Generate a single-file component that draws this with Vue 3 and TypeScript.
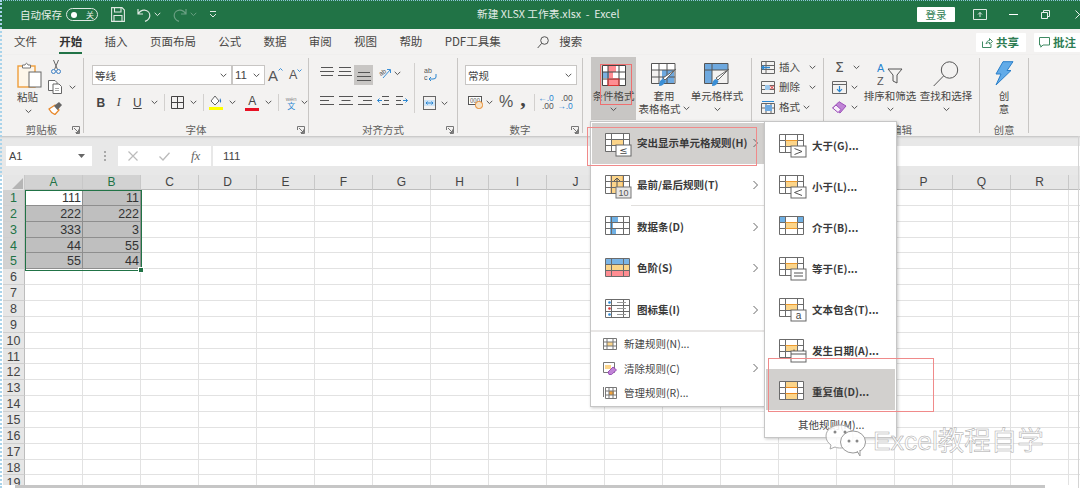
<script setup lang="ts">
import { h } from 'vue'

const Ch = () =>
  h('svg', { class: 'ch', width: 7, height: 5, viewBox: '0 0 7 5', fill: 'none', stroke: '#555', 'stroke-width': 1 }, [
    h('path', { d: 'M.7 .8 3.5 3.6 6.3 .8' })
  ])
const Launcher = () =>
  h('svg', { class: 'launcher', width: 8, height: 8, viewBox: '0 0 8 8', fill: 'none', stroke: '#777', 'stroke-width': 1 }, [
    h('path', { d: 'M.5 4V.5H7.5V7.5H4M2 2 6.5 6.5M6.5 3.5V6.5H3.5' })
  ])
const Lines = (p: { w: number[] }) =>
  h('svg', { width: 14, height: 12, viewBox: '0 0 14 12', fill: 'none', stroke: '#555', 'stroke-width': 1 },
    p.w.map((x, i) => h('path', { d: `M${(14 - x) / 2} ${1.5 + i * 4}h${x}` })))
Lines.props = ['w']
const AlignL = () =>
  h('svg', { width: 14, height: 12, viewBox: '0 0 14 12', fill: 'none', stroke: '#555', 'stroke-width': 1 }, [
    h('path', { d: 'M0 1.5h14M0 5.5h9M0 9.5h14' })
  ])

const tabs = ['文件', '开始', '插入', '页面布局', '公式', '数据', '审阅', '视图', '帮助', 'PDF工具集']
const colNames = 'ABCDEFGHIJKLMNOPQR '.split('')
const data: Record<number, string[]> = {
  1: ['111', '11'],
  2: ['222', '222'],
  3: ['333', '3'],
  4: ['44', '55'],
  5: ['55', '44']
}
const rows = Array.from({ length: 19 }, (_, i) => i + 1)
const cellText = (r: number, c: number) => (c < 2 && data[r] ? data[r][c] : '')
const isGrey = (r: number, c: number) => r <= 5 && c < 2 && !(r === 1 && c === 0)

const mainItems = [
  { kind: 'hl', label: '突出显示单元格规则(H)', cls: 'active' },
  { kind: 'top', label: '最前/最后规则(T)', cls: 'rule' },
  { kind: 'bar', label: '数据条(D)', cls: '' },
  { kind: 'scale', label: '色阶(S)', cls: '' },
  { kind: 'set', label: '图标集(I)', cls: '' }
]
const subItems = [
  { mark: '>', label: '大于(G)...', cls: '' },
  { mark: '<', label: '小于(L)...', cls: '' },
  { mark: 'between', label: '介于(B)...', cls: '' },
  { mark: '=', label: '等于(E)...', cls: '' },
  { mark: 'a', label: '文本包含(T)...', cls: '' },
  { mark: 'date', label: '发生日期(A)...', cls: 'short' },
  { mark: 'dup', label: '重复值(D)...', cls: 'active dup' }
]
</script>

<template>
  <div class="app">
    <header class="titlebar">
      <span class="autosave">自动保存</span>
      <span class="toggle"><i class="knob"></i><b>关</b></span>
      <svg class="qa save" width="14" height="15" viewBox="0 0 14 15" fill="none" stroke="#dfe9e3" stroke-width="1.1">
        <path d="M.6.6H11L13.4 3V14.4H.6zM3.5.6V5H10V.6M3 14.4V8.5H11V14.4" />
      </svg>
      <svg class="qa undo" width="14" height="14" viewBox="0 0 14 14" fill="none" stroke="#dfe9e3" stroke-width="1.2">
        <path d="M1 1V6H6M1.2 6C3 3 5 2 7.500 2.200 11 2.500 13 5 12.800 8 12.500 10.500 10.500 12.500 8 13.400" />
      </svg>
      <svg class="tch" width="7" height="5" viewBox="0 0 7 5" fill="none" stroke="#dfe9e3"><path d="M.7 .8 3.500 3.600 6.300 .8" /></svg>
      <svg class="qa redo" width="14" height="14" viewBox="0 0 14 14" fill="none" stroke="#6aa083" stroke-width="1.2">
        <path d="M13 1V6H8M12.800 6C11 3 9 2 6.500 2.200 3 2.500 1 5 1.200 8 1.500 10.500 3.500 12.500 6 13.400" />
      </svg>
      <svg class="tch dim" width="7" height="5" viewBox="0 0 7 5" fill="none" stroke="#6aa083"><path d="M.7 .8 3.500 3.600 6.300 .8" /></svg>
      <svg class="qa custom" width="8" height="7" viewBox="0 0 8 7" fill="none" stroke="#dfe9e3"><path d="M1 .5H7M1 3 4 6 7 3" /></svg>
      <span class="doc">新建 XLSX 工作表.xlsx&nbsp; - &nbsp;Excel</span>
      <button class="login">登录</button>
      <svg class="win display" width="14" height="11" viewBox="0 0 14 11" fill="none" stroke="#dfe9e3"><path d="M.5.500H13.500V10.500H.5zM7 8V3.500M5 5.500 7 3.500 9 5.500" /></svg>
      <svg class="win min" width="9" height="1" viewBox="0 0 9 1"><path d="M0 .5H9" stroke="#fff" /></svg>
      <svg class="win restore" width="9" height="9" viewBox="0 0 9 9" fill="none" stroke="#e8f0eb"><path d="M.5 2.500H6.500V8.500H.5zM2.500 2.500V.5H8.500V6.500H6.500" /></svg>
      <svg class="win close" width="9" height="9" viewBox="0 0 9 9" fill="none" stroke="#e8f0eb"><path d="M.5.5 8.500 8.500M8.500.5.5 8.500" /></svg>
    </header>

    <nav class="tabs">
      <span v-for="t in tabs" :key="t" class="tab" :class="{ on: t === '开始' }">{{ t }}</span>
      <svg class="search-ic" width="12" height="13" viewBox="0 0 12 13" fill="none" stroke="#555" stroke-width="1">
        <circle cx="7.500" cy="4.500" r="3.800" /><path d="M4.700 7.300 .7 12" />
      </svg>
      <span class="tab search">搜索</span>
      <button class="pill share">
        <svg width="11" height="11" viewBox="0 0 11 11" fill="none" stroke="#3f8a63"><path d="M.5 4.500V10.500H9V7M4 7C4.500 4.500 6 3.500 7.500 3.500V1.500L10.500 4.500 7.500 7V5.500C6 5.500 5 6 4 7Z" /></svg>
        共享
      </button>
      <button class="pill note">
        <svg width="11" height="11" viewBox="0 0 11 11" fill="none" stroke="#3f8a63"><path d="M.5.500H10.500V8H4L1.800 10.200V8H.5z" /></svg>
        批注
      </button>
    </nav>

    <section class="ribbon">
      <!-- 剪贴板 -->
      <div class="group g-clip">
        <div class="body clip-body">
          <div class="big paste">
            <svg width="25" height="26" viewBox="0 0 25 26" fill="none">
              <rect x="1" y="4" width="17" height="21" fill="#fdf6ea" stroke="#ee9f3c" stroke-width="1.400" />
              <path d="M5.500 6V3H8Q9.500-.5 11 3H13.500V6z" fill="#fff" stroke="#777" />
              <rect x="12" y="10" width="12" height="15" fill="#fff" stroke="#666" />
            </svg>
            <span class="lbl mt">粘贴</span>
            <Ch class="chm" />
          </div>
          <div class="clip-tools">
            <svg class="cut" width="10" height="14" viewBox="0 0 10 14" fill="none" stroke="#3b7fc4">
              <path d="M2.500 0 6.500 9.500M7.500 0 3.500 9.500" stroke="#666" /><circle cx="2.500" cy="11.500" r="2" /><circle cx="7.500" cy="11.500" r="2" />
            </svg>
            <span class="hrow">
              <svg width="15" height="14" viewBox="0 0 15 14" fill="#fff" stroke="#666">
                <path d="M.5.500H7L9 2.500V10.500H.5z" /><path d="M5 4H11L13.500 6.500V13.500H5z" /><path d="M7 8.500H11M7 10.500H11" stroke="#aaa" />
              </svg>
              <Ch class="ml6" />
            </span>
            <svg class="painter" width="15" height="14" viewBox="0 0 15 14">
              <path d="M1 8 7 4 11 9 7 13.500Q3 12 1 8Z" fill="#fff" stroke="#e8882a" stroke-width="1.300" />
              <path d="M6 5 11 1 14 4 9.500 9z" fill="#666" />
            </svg>
          </div>
        </div>
        <div class="glabel">剪贴板<Launcher /></div>
      </div>

      <!-- 字体 -->
      <div class="group g-font">
        <div class="body font-body">
          <div class="hrow">
            <div class="combo c-name"><span>等线</span><Ch /></div>
            <div class="combo c-size"><span>11</span><Ch /></div>
            <span class="aa a-up">A<svg width="5" height="3" viewBox="0 0 5 3" fill="none" stroke="#3b8fd6"><path d="M.5 2.500 2.500 .5 4.500 2.500" /></svg></span>
            <span class="aa a-down">A<svg width="5" height="3" viewBox="0 0 5 3" fill="none" stroke="#3b8fd6"><path d="M.5 .5 2.500 2.500 4.500 .5" /></svg></span>
          </div>
          <div class="hrow font-tools">
            <b class="fmt">B</b>
            <i class="fmt italic">I</i>
            <u class="fmt und">U</u>
            <Ch class="ml9" />
            <i class="vsep s1"></i>
            <svg class="borders" width="13" height="13" viewBox="0 0 13 13" fill="none" stroke="#444"><path d="M.5.500H12.500V12.500H.5zM6.500.500V12.500M.5 6.500H12.500" /></svg>
            <Ch class="ml6" />
            <i class="vsep s2"></i>
            <span class="stack fill">
              <svg width="12" height="11" viewBox="0 0 12 11"><path d="M1 6 5 1 9 6 5 10z" fill="#fff" stroke="#666" /><path d="M10 3Q12 6 10.500 8 9 6.500 10 3Z" fill="#2a75c4" /></svg>
              <i class="swatch yellow"></i>
            </span>
            <Ch class="ml6" />
            <span class="stack color"><em>A</em><i class="swatch red"></i></span>
            <Ch class="ml6" />
            <i class="vsep s3"></i>
            <span class="wen"><small>wén</small><em>文</em></span>
            <Ch class="ml3" />
          </div>
        </div>
        <div class="glabel">字体<Launcher /></div>
      </div>

      <!-- 对齐方式 -->
      <div class="group g-align">
        <div class="body align-body">
          <div class="align-left">
            <div class="hrow a-row1">
              <Lines :w="[12, 14, 12]" />
              <Lines class="ml4" :w="[12, 12, 14]" />
              <span class="pressed"><Lines :w="[12, 14, 14]" /></span>
              <svg class="orient" width="13" height="13" viewBox="0 0 13 13" fill="none" stroke="#555">
                <text x="1" y="8" font-size="6.500" fill="#555" stroke="none" font-family="Liberation Sans, sans-serif" transform="rotate(-35 4 6)">ab</text>
                <path d="M5 11 12 3M9 2.500H12.500V6" stroke="#3b8fd6" />
              </svg>
              <Ch class="orient-ch" />
            </div>
            <div class="hrow a-row2">
              <AlignL />
              <Lines class="ml5" :w="[14, 9, 14]" />
              <svg class="ml5" width="14" height="12" viewBox="0 0 14 12" fill="none" stroke="#555"><path d="M0 1.500h14M5 5.500h9M0 9.500h14" /></svg>
              <svg class="ml5" width="12" height="12" viewBox="0 0 12 12" fill="none" stroke="#555"><path d="M5 1.500h7M7 5.500h5M5 9.500h7" /><path d="M5 5.500H.5M2.500 3.500.5 5.500 2.500 7.500" stroke="#2a86d1" /></svg>
              <svg class="ml7" width="12" height="12" viewBox="0 0 12 12" fill="none" stroke="#555"><path d="M0 1.500h7M0 5.500h5M0 9.500h7" /><path d="M7 5.500h4.500M9.500 3.500 11.500 5.500 9.500 7.500" stroke="#2a86d1" /></svg>
            </div>
          </div>
          <i class="vsep align-sep"></i>
          <div class="align-right">
            <svg class="wrap" width="13" height="15" viewBox="0 0 13 15" fill="none">
              <text x="0" y="6" font-size="7" fill="#555" font-family="Liberation Sans, sans-serif">ab</text>
              <text x="0" y="13" font-size="7" fill="#555" font-family="Liberation Sans, sans-serif">c</text>
              <path d="M12 7V10Q12 12 9 12H5M7 10 5 12 7 14" stroke="#2a86d1" />
            </svg>
            <div class="hrow merge-row">
              <svg class="merge" width="13" height="14" viewBox="0 0 13 14" fill="none">
                <rect x=".5" y=".5" width="12" height="13" stroke="#666" /><rect x="1" y="4" width="11" height="6" fill="#cfe4f6" />
                <path d="M3 7H10M4.500 5.500 3 7 4.500 8.500M8.500 5.500 10 7 8.500 8.500" stroke="#2a86d1" />
              </svg>
              <Ch class="ml5" />
            </div>
          </div>
        </div>
        <div class="glabel">对齐方式<Launcher /></div>
      </div>

      <!-- 数字 -->
      <div class="group g-num">
        <div class="body num-body">
          <div class="combo c-fmt"><span>常规</span><Ch /></div>
          <div class="hrow num-tools">
            <svg width="15" height="14" viewBox="0 0 15 14" fill="none">
              <rect x=".5" y="1.500" width="13" height="8" fill="#fff" stroke="#555" /><text x="2" y="8" font-size="6" fill="#555">000</text>
              <rect x="7.500" y="6.500" width="7" height="7" rx="3" fill="#f5e2c7" stroke="#e8882a" />
            </svg>
            <Ch class="ml3" />
            <span class="pct">%</span>
            <span class="comma">,</span>
            <i class="vsep s4"></i>
            <span class="dec d1"><small class="blue">←.0</small><small>.00</small></span>
            <span class="dec d2"><small>.00</small><small class="blue">→.0</small></span>
          </div>
        </div>
        <div class="glabel">数字<Launcher /></div>
      </div>

      <!-- 样式 -->
      <div class="group g-style">
        <div class="style-btn cf">
          <svg width="24" height="21" viewBox="0 0 24 21">
            <path d="M.5.500H23.500V20.500H.5z" fill="#fff" />
            <path d="M6 .5H14V7H11V13H6z" fill="#ff8d92" /><rect x="1" y="7" width="6" height="6" fill="#7bb0e0" /><rect x="6" y="14" width="11" height="6" fill="#ff8d92" />
            <path d="M.5.500H23.500V20.500H.5zM.5 7H23.500M.5 14H23.500M6 .5V20.500M17 .5V20.500" fill="none" stroke="#444" />
            <path d="M6 14H17V20.500H6z" fill="none" stroke="#d33" />
          </svg>
          <span class="lbl l1">条件格式</span>
          <Ch class="chb" />
        </div>
        <div class="style-btn tb">
          <svg width="26" height="24" viewBox="0 0 26 24">
            <rect x="11" y="7" width="12" height="14" fill="#6ea9df" /><rect x="1" y="1" width="23" height="6" fill="#fff" />
            <path d="M.5.500H24V20.500H.5zM.5 7H24M.5 14H24M8 .5V20.500M16 .5V20.500" fill="none" stroke="#555" />
            <path d="M25 6 14 17 12 15Z" fill="#fff" stroke="#666" /><path d="M12 16Q8 17 8 23 13 23 14.500 18z" fill="#3b8fd6" />
          </svg>
          <span class="lbl l1">套用</span>
          <span class="lbl l2">表格格式<Ch class="ml2" /></span>
        </div>
        <div class="style-btn cs">
          <svg width="26" height="24" viewBox="0 0 26 24">
            <rect x="1" y="1" width="23" height="6" fill="#6ea9df" /><rect x="1" y="7" width="7" height="14" fill="#6ea9df" />
            <path d="M.5.500H24V20.500H.5zM.5 7H24M8 .5V20.500" fill="none" stroke="#555" />
            <path d="M25 6 14 17 12 15Z" fill="#fff" stroke="#666" /><path d="M12 16Q8 17 8 23 13 23 14.500 18z" fill="#3b8fd6" />
          </svg>
          <span class="lbl l1">单元格样式</span>
          <Ch class="chb" />
        </div>
      </div>

      <!-- 单元格 -->
      <div class="group g-cells">
        <div class="cell-row">
          <svg width="14" height="13" viewBox="0 0 14 13" fill="none"><path d="M.5.500H13.500V12.500H.5zM.5 4.500H13.500M.5 8.500H13.500M5 .5V12.500" stroke="#666" /><path d="M1 6.500H9M3 4.500 1 6.500 3 8.500" stroke="#2a86d1" stroke-width="1.300" /></svg>
          <span>插入</span><Ch class="ml9" />
        </div>
        <div class="cell-row">
          <svg width="14" height="13" viewBox="0 0 14 13" fill="none"><path d="M.5.500H13.500V12.500H.5zM.5 4.500H13.500M.5 8.500H13.500" stroke="#666" /><rect x="4" y="4" width="5" height="5" fill="#9cc8ec" /><path d="M9 4.500 13 8.500M13 4.500 9 8.500" stroke="#d33" /></svg>
          <span>删除</span><Ch class="ml9" />
        </div>
        <div class="cell-row">
          <svg width="14" height="13" viewBox="0 0 14 13" fill="none"><path d="M.5 2.500H13.500V12.500H.5zM.5 7H13.500M5 2.500V12.500M10 2.500V12.500" stroke="#666" /><rect x="4" y="4" width="7" height="6" fill="#6ea9df" /><path d="M1 .5H13" stroke="#2a86d1" /></svg>
          <span>格式</span><Ch class="ml3" />
        </div>
      </div>

      <!-- 编辑 -->
      <div class="group g-edit">
        <div class="body edit-body">
          <div class="edit-col">
            <span class="hrow"><span class="sigma">Σ</span><Ch class="ml6" /></span>
            <span class="hrow">
              <svg width="15" height="13" viewBox="0 0 15 13" fill="none"><path d="M.5.500H14.500V12.500H.5zM.5 3.500H14.500" stroke="#666" /><path d="M7.500 5V10.500M5 8.200 7.500 10.700 10 8.200" stroke="#2a86d1" stroke-width="1.200" /></svg>
              <Ch class="ml4" />
            </span>
            <span class="hrow">
              <svg width="15" height="13" viewBox="0 0 15 13"><path d="M.7 7 7 .7 14 5 8 12z" fill="#c084d6" stroke="#9b4fb8" /><path d="M.7 7 4 4 9 8.500 6 11.500z" fill="#f7edfa" stroke="#9b4fb8" /></svg>
              <Ch class="ml4" />
            </span>
          </div>
          <div class="tool-big sort">
            <svg width="26" height="24" viewBox="0 0 26 24" fill="none">
              <text x="0" y="10" font-size="11" fill="#2a86d1" font-family="Liberation Sans, sans-serif">A</text>
              <text x="0" y="23" font-size="11" fill="#555" font-family="Liberation Sans, sans-serif">Z</text>
              <path d="M11 7H25L20 13V21L16 19V13Z" stroke="#555" />
            </svg>
            <span class="lbl l1">排序和筛选</span>
            <Ch class="chb" />
          </div>
          <div class="tool-big find">
            <svg width="26" height="26" viewBox="0 0 26 26" fill="none" stroke="#555">
              <circle cx="16.500" cy="9" r="8.200" /><path d="M10.500 15 .7 25" />
            </svg>
            <span class="lbl l1">查找和选择</span>
            <Ch class="chb" />
          </div>
        </div>
        <div class="glabel">编辑</div>
      </div>

      <!-- 创意 -->
      <div class="group g-idea">
        <div class="idea-btn">
          <svg width="19" height="25" viewBox="0 0 19 25"><path d="M8 .7H18L12 9.500H16L1 24 6 13H1Z" fill="#62abe8" stroke="#2a7fc9" /></svg>
          <span class="lbl l1">创</span>
          <span class="lbl l2">意</span>
        </div>
        <div class="glabel">创意</div>
      </div>
    </section>

    <div class="formula">
      <div class="namebox"><span>A1</span><svg width="7" height="4" viewBox="0 0 7 4"><path d="M0 0H7L3.500 4Z" fill="#666" /></svg></div>
      <i class="grip"></i>
      <div class="fx-btns">
        <svg width="10" height="10" viewBox="0 0 10 10" fill="none" stroke="#bbb" stroke-width="1.200"><path d="M.5.5 9.500 9.500M9.500.5.5 9.500" /></svg>
        <svg width="11" height="9" viewBox="0 0 11 9" fill="none" stroke="#bbb" stroke-width="1.300"><path d="M.5 4.500 4 8 10.500 .7" /></svg>
        <span class="fx">fx</span>
      </div>
      <div class="finput">111</div>
    </div>

    <div class="sheet">
      <div class="corner"><i></i></div>
      <div v-for="(c, i) in colNames" :key="i" class="colh" :class="{ sel: i < 2 }">{{ c }}</div>
      <template v-for="r in rows" :key="r">
        <div class="rowh" :class="{ sel: r <= 5 }">{{ r }}</div>
        <div v-for="(c, i) in colNames" :key="i" class="cell" :class="{ grey: isGrey(r, i), white: r === 1 && i === 0 }">{{ cellText(r, i) }}</div>
      </template>
      <div class="selection"><i></i></div>
    </div>
    <div class="hscroll"><i></i></div>
    <i class="edge"></i>

    <!-- 条件格式 下拉菜单 -->
    <div class="menu main-menu">
      <div v-for="m in mainItems" :key="m.kind" class="mitem" :class="m.cls">
        <svg class="micon" width="34" height="26" viewBox="0 0 34 26">
          <rect x="1" y="1" width="23" height="17" fill="#fff" />
          <template v-if="m.kind === 'hl'">
            <rect x="6" y="6.500" width="12" height="6" fill="#fcd58a" /><path d="M6 6.500H18" stroke="#ed9a2d" />
          </template>
          <template v-else-if="m.kind === 'top'">
            <rect x="6" y="1" width="12" height="17" fill="#fcd58a" /><path d="M6 1V18M18 1V18" stroke="#ed9a2d" />
          </template>
          <template v-else-if="m.kind === 'bar'">
            <rect x="5" y="1" width="8" height="5.500" fill="#6fb0e4" /><rect x="5" y="6.500" width="3" height="6" fill="#6fb0e4" /><rect x="5" y="12.500" width="6" height="6" fill="#6fb0e4" />
          </template>
          <template v-else-if="m.kind === 'scale'">
            <rect x="1" y="1" width="23" height="5.500" fill="#7ab4e6" /><rect x="1" y="6.500" width="23" height="5.500" fill="#fcd58a" /><rect x="1" y="12" width="23" height="6" fill="#ff8d92" />
          </template>
          <path d="M.5.500H24.500V18.500H.5zM.5 6.500H24.500M.5 12.500H24.500M6.500.5V18.500M18.500.5V18.500" fill="none" stroke="#6b6b6b" />
          <template v-if="m.kind === 'hl'">
            <rect x="11" y="12" width="15" height="11" fill="#fff" stroke="#666" />
            <text x="18.500" y="21" text-anchor="middle" font-size="10" fill="#444" font-family="DejaVu Sans, sans-serif">≤</text>
          </template>
          <template v-else-if="m.kind === 'top'">
            <path d="M12 13V3M9 6 12 3 15 6" fill="none" stroke="#555" />
            <rect x="11" y="12" width="15" height="11" fill="#e8e8e8" stroke="#777" />
            <text x="18.500" y="21" text-anchor="middle" font-size="9" fill="#555" font-family="Liberation Sans, sans-serif">10</text>
          </template>
          <template v-else-if="m.kind === 'set'">
            <circle cx="4.500" cy="3.500" r="1.300" fill="#2a86d1" /><circle cx="4.500" cy="9.500" r="1.300" fill="#d33" /><circle cx="4.500" cy="15.500" r="1.300" fill="#2a86d1" />
            <path d="M12 3.500H21M12 9.500H21M12 15.500H21" stroke="#999" />
          </template>
        </svg>
        <span class="mtext">{{ m.label }}</span>
        <svg class="arrow" width="5" height="9" viewBox="0 0 5 9" fill="none" stroke="#666"><path d="M.5.5 4.500 4.500 .5 8.500" /></svg>
      </div>
      <i class="part-sep"></i>
      <i class="full-sep"></i>
      <div class="msmall">
        <svg width="14" height="12" viewBox="0 0 14 12"><rect x="4" y="4" width="6" height="4" fill="#fcd58a" /><path d="M.5.500H13.500V11.500H.5zM.5 4H13.500M.5 8H13.500M4 .5V11.500M10 .5V11.500" fill="none" stroke="#777" /></svg>
        <span>新建规则(N)...</span>
      </div>
      <div class="msmall">
        <svg width="14" height="13" viewBox="0 0 14 13"><path d="M.5.500H11.500V10.500H.5z" fill="#fff" stroke="#777" /><rect x="2" y="3" width="6" height="4" fill="#fcd58a" /><path d="M5 10 10 5 13.500 8 8.500 12.500H6z" fill="#c084d6" stroke="#9b4fb8" /></svg>
        <span>清除规则(C)</span>
        <svg class="arrow" width="5" height="9" viewBox="0 0 5 9" fill="none" stroke="#666"><path d="M.5.5 4.500 4.500 .5 8.500" /></svg>
      </div>
      <div class="msmall">
        <svg width="14" height="13" viewBox="0 0 14 13"><rect x="6" y="5" width="5" height="4" fill="#f2a33a" /><path d="M2.500 1.500H13.500V12.500H2.500zM2.500 5H13.500M2.500 9H13.500M6 1.500V12.500M10 1.500V12.500M.5 1V11" fill="none" stroke="#777" /></svg>
        <span>管理规则(R)...</span>
      </div>
    </div>

    <!-- 子菜单 -->
    <div class="menu sub-menu">
      <div v-for="s in subItems" :key="s.label" class="sitem" :class="s.cls">
        <svg class="sicon" width="28" height="24" viewBox="0 0 28 24">
          <rect x="1" y="1" width="23" height="17" fill="#fff" />
          <template v-if="s.mark === 'dup'">
            <rect x="6" y="1" width="12" height="5.500" fill="#fcd58a" /><rect x="6" y="12.500" width="12" height="6" fill="#fcd58a" />
          </template>
          <template v-else>
            <rect x="6" y="6.500" width="12" height="6" fill="#fcd58a" />
            <template v-if="s.mark === 'between'">
              <rect x="1" y="1" width="5.500" height="5.500" fill="#6fb0e4" /><rect x="18.500" y="1" width="5.500" height="5.500" fill="#6fb0e4" />
            </template>
          </template>
          <path d="M.5.500H24.500V18.500H.5zM.5 6.500H24.500M.5 12.500H24.500M6.500.5V18.500M18.500.5V18.500" fill="none" stroke="#6b6b6b" />
          <path v-if="s.mark === 'dup'" d="M6.500 6.500H18.500M6.500 12.500H18.500" stroke="#ed8a1d" fill="none" />
          <path v-else d="M6.500 6.500H18.500" stroke="#ed9a2d" />
          <path v-if="s.mark === 'between'" d="M6.500 12.500H18.500" stroke="#ed9a2d" />
          <template v-if="s.mark === '>' || s.mark === '<' || s.mark === '=' || s.mark === 'a' || s.mark === 'date'">
            <rect x="12" y="12" width="15" height="11" fill="#fff" stroke="#666" />
            <text v-if="s.mark === 'a'" x="19.500" y="21" text-anchor="middle" font-size="10" fill="#444" font-family="Liberation Sans, sans-serif">a</text>
            <path v-else-if="s.mark === '='" d="M15 16H24M15 19H24" stroke="#555" />
            <path v-else-if="s.mark === '>'" d="M15.500 14.500 23 17.500 15.500 20.500" fill="none" stroke="#555" />
            <path v-else-if="s.mark === '<'" d="M23 14.500 15.500 17.500 23 20.500" fill="none" stroke="#555" />
            <path v-else d="M12 15H27M15 12V10.500M24 12V10.500" fill="none" stroke="#555" />
          </template>
        </svg>
        <span class="stext">{{ s.label }}</span>
      </div>
      <div class="sother">其他规则(M)...</div>
    </div>

    <!-- 标注框 -->
    <i class="mark m1"></i>
    <i class="mark m2"></i>
    <i class="mark m3"></i>

    <!-- 水印 -->
    <div class="watermark">
      <svg width="42" height="34" viewBox="0 0 42 34">
        <path d="M15 1C7 1 1 6 1 12 1 16 3 19 6 21L5 25 10 23C12 24 14 24 16 24 22 24 28 19 28 12 28 6 22 1 15 1Z" fill="rgba(255,255,255,.85)" stroke="#aaa" />
        <ellipse cx="28" cy="18" rx="12.500" ry="11" fill="rgba(255,255,255,.92)" stroke="#999" />
        <path d="M32 27 35 32 35 26" fill="#fff" stroke="#999" />
        <circle cx="24" cy="17" r="1.500" fill="#888" /><circle cx="32" cy="17" r="1.500" fill="#888" />
        <circle cx="10" cy="8" r="1.500" fill="#888" /><circle cx="20" cy="8" r="1.500" fill="#888" />
      </svg>
      <span>Excel教程自学</span>
    </div>
  </div>
</template>

<style>
html,
body {
  margin: 0;
  background: #fff;
}
</style>

<style scoped>
.app {
  position: relative;
  width: 1080px;
  height: 488px;
  overflow: hidden;
  box-sizing: border-box;
  display: flex;
  flex-direction: column;
  padding-left: 3px;
  background: #fff;
  font-family: "Noto Sans CJK SC", "Liberation Sans", sans-serif;
  color: #444;
}
.app::before {
  content: "";
  position: absolute;
  inset: 0 0 auto 0;
  border-top: 1px dotted #8fc6dd;
  z-index: 5;
}
.app::after {
  content: "";
  position: absolute;
  inset: 0 auto 0 0;
  border-left: 2px dotted #a9d3ea;
  z-index: 5;
}
button {
  font-family: inherit;
  border: 0;
  padding: 0;
}
svg {
  flex: none;
  display: block;
}
.hrow {
  display: flex;
  align-items: center;
}
.ml2 { margin-left: 2px; }
.ml3 { margin-left: 3px; }
.ml4 { margin-left: 4px; }
.ml5 { margin-left: 5px; }
.ml6 { margin-left: 6px; }
.ml7 { margin-left: 7px; }
.ml9 { margin-left: 9px; }

/* title bar */
.titlebar {
  flex: none;
  height: 29px;
  margin-left: -3px;
  background: #217346;
  display: flex;
  align-items: center;
  color: #e6efe9;
  font-size: 10.500px;
}
.autosave { margin-left: 20px; width: 42px; white-space: nowrap; }
.toggle {
  margin-left: 4px;
  width: 30px;
  height: 11px;
  border: 1px solid #dfe9e3;
  border-radius: 7px;
  display: flex;
  align-items: center;
  font-size: 8px;
  line-height: 1;
}
.knob { width: 6px; height: 6px; border-radius: 50%; background: #fff; margin-left: 4px; }
.toggle b { font-weight: 400; margin-left: 9px; }
.save { margin-left: 13px; }
.undo { margin-left: 12px; }
.tch { margin-left: 3px; }
.redo { margin-left: 12px; }
.dim { margin-left: 3px; }
.custom { margin-left: 12px; }
.doc { position: absolute; left: 477px; top: 5px; font-size: 10.700px; line-height: 17px; white-space: pre; color: #e3ece7; }
.login {
  margin-left: auto;
  width: 38px;
  height: 15px;
  background: #fff;
  color: #2f8055;
  font-size: 10.500px;
  line-height: 15px;
  border-radius: 1px;
}
.display { margin-left: 18px; }
.min { margin-left: 22px; }
.restore { margin-left: 23px; }
.close { margin-left: 25px; margin-right: -4px; }

/* tabs */
.tabs {
  flex: none;
  height: 26px;
  background: #f3f2f1;
  margin-left: -3px;
  padding-left: 14px;
  display: flex;
  align-items: center;
  gap: 22.300px;
  font-size: 11.500px;
}
.tab { position: relative; white-space: nowrap; color: #484644; line-height: 18px; top: -1px; }
.tab.on { font-weight: 700; color: #333; }
.tab.on::after {
  content: "";
  position: absolute;
  left: 0;
  right: 0;
  bottom: -4px;
  height: 2px;
  background: #217346;
}
.search-ic { margin-left: 14px; }
.tab.search { margin-left: -12px; }
.pill {
  flex: none;
  height: 19px;
  background: #fff;
  color: #2f7d54;
  font-weight: 700;
  font-size: 11.500px;
  display: flex;
  align-items: center;
  justify-content: center;
  gap: 3px;
  border-radius: 1px;
  white-space: nowrap;
}
.share { width: 50px; margin-left: 371px; }
.note { width: 48px; margin-left: -14.300px; }

/* ribbon */
.ribbon {
  position: relative;
  flex: none;
  height: 81px;
  margin-left: -3px;
  background: #f3f2f1;
  box-shadow: 0 1px 2px rgba(0, 0, 0, 0.18);
  display: flex;
  font-size: 10.500px;
}
.group {
  position: relative;
  flex: none;
  box-sizing: border-box;
  height: 75px;
  margin-top: 3px;
  border-right: 1px solid #c8c6c4;
  display: flex;
  flex-direction: column;
}
.body { flex: 1; min-height: 0; }
.glabel {
  position: relative;
  flex: none;
  height: 16px;
  line-height: 16px;
  margin: auto 0 -5px;
  text-align: center;
  color: #605e5c;
  font-size: 10.500px;
}
.launcher { position: absolute; right: 3px; top: 4px; }
.lbl { display: block; line-height: 13px; white-space: nowrap; color: #484644; }
.g-clip { width: 84px; }
.g-font { width: 225px; }
.g-align { width: 149px; }
.g-num { width: 125px; }
.g-style { width: 169px; display: block; }
.g-cells { width: 72px; padding-left: 9px; display: block; }
.g-edit { width: 156px; }
.g-idea { width: 49px; }

.clip-body { display: flex; padding: 4px 0 0 17px; }
.paste { width: 30px; }
.paste .lbl { margin-top: 2px; }
.chm { margin: 6px 0 0 8px; }
.clip-tools { display: flex; flex-direction: column; gap: 6px; padding-left: 1px; margin-top: -2px; }
.cut { margin-left: 3px; }
.painter { margin-top: 1px; }

.font-body { padding: 7px 0 0 8px; }
.combo {
  box-sizing: border-box;
  height: 20px;
  background: #fff;
  border: 1px solid #c8c6c4;
  display: flex;
  align-items: center;
  justify-content: space-between;
  padding: 0 4px 0 2px;
  font-size: 10.500px;
  color: #444;
}
.c-name { width: 140px; }
.c-size { width: 33px; font-family: "Liberation Sans", sans-serif; font-size: 11.500px; }
.aa { position: relative; font-family: "Liberation Sans", sans-serif; color: #555; line-height: 1; display: flex; align-items: flex-start; }
.a-up { font-size: 15px; margin-left: 3px; }
.a-down { font-size: 12.500px; margin-left: 6px; }
.font-tools { margin-top: 9px; height: 17px; padding-left: 4px; font-family: "Liberation Sans", sans-serif; font-size: 12px; }
.fmt { width: 10px; text-align: center; font-style: normal; color: #444; }
.italic { margin-left: 8px; font-family: "Liberation Serif", serif; font-style: italic; }
.und { margin-left: 9px; }
.vsep { flex: none; width: 1px; height: 17px; background: #d2d0ce; }
.s1 { margin: 0 6px 0 6px; }
.s2 { margin: 0 5px 0 6px; }
.s3 { margin: 0 5px 0 6px; }
.s4 { margin: 0 5px 0 8px; }
.stack { display: flex; flex-direction: column; align-items: center; width: 14px; }
.stack em { font-style: normal; font-size: 12px; line-height: 12px; color: #444; }
.color { margin-left: 9px; }
.swatch { width: 14px; height: 3px; }
.yellow { background: #ffff00; margin-top: 1px; }
.red { background: #e81123; margin-top: 1px; }
.wen { width: 14px; display: flex; flex-direction: column; align-items: center; line-height: 1; }
.wen small { font-size: 6px; color: #888; }
.wen em { font-family: "Noto Sans CJK SC", sans-serif; font-style: normal; font-size: 8px; color: #2a86d1; }

.align-body { display: flex; padding-left: 11px; }
.align-left { width: 94px; flex: none; }
.a-row1 { height: 24px; margin-top: 4px; align-items: flex-start; padding-top: 4px; box-sizing: border-box; }
.pressed { margin: -1px 0 0 2px; width: 19px; height: 20px; background: #c8c6c4; display: flex; justify-content: center; padding-top: 6px; box-sizing: border-box; }
.orient { margin: 1px 0 0 5px; }
.orient-ch { margin: 5px 0 0 3px; }
.a-row2 { margin-top: 7px; height: 16px; }
.align-sep { height: 50px; margin: 5px 8px 0 0; }
.align-right { flex: none; }
.wrap { margin: 9px 0 0 1px; }
.merge-row { margin-top: 13px; height: 16px; }

.num-body { padding: 7px 0 0 7px; }
.c-fmt { width: 112px; }
.num-tools { margin-top: 8px; padding-left: 3px; height: 18px; }
.pct { margin-left: 6px; font-family: "Liberation Sans", sans-serif; font-size: 16px; color: #555; }
.comma { margin-left: 7px; font-family: "Liberation Serif", serif; font-weight: 700; font-size: 22px; line-height: 10px; height: 16px; color: #444; }
.dec { display: flex; flex-direction: column; align-items: flex-end; width: 14px; font-family: "Liberation Sans", sans-serif; line-height: 8px; }
.dec small { font-size: 8.500px; color: #555; white-space: nowrap; }
.dec .blue { color: #2a86d1; }
.d2 { margin-left: 5px; }

.style-btn { float: left; box-sizing: border-box; height: 63px; display: flex; flex-direction: column; align-items: center; }
.cf { position: relative; width: 45px; margin: -1px 0 0 8px; padding-top: 8px; background: #c8c6c4; }
.cf .l1 { margin-top: 3px; }
.chb { margin-top: 5px; }
.tb { width: 54px; margin-left: 0; padding-top: 6px; margin-top: -1px; margin-left: 1px; }
.tb .l1, .cs .l1 { margin-top: 2px; }
.tb .l2 { display: flex; align-items: center; }
.cs { width: 50px; padding-top: 6px; margin-top: -1px; margin-left: 1px; }

.cell-row { display: flex; align-items: center; height: 20px; line-height: 1; color: #484644; }
.cell-row:first-child { margin-top: -1px; }
.cell-row span { margin-left: 4px; }

.edit-body { display: flex; padding-left: 8px; }
.edit-col { width: 30px; flex: none; display: flex; flex-direction: column; margin-top: -1px; }
.edit-col > .hrow { height: 20px; }
.sigma { width: 15px; font-family: "DejaVu Sans", sans-serif; font-size: 14px; line-height: 1; color: #555; text-align: center; }
.tool-big { display: flex; flex-direction: column; align-items: center; width: 56px; flex: none; padding-top: 3px; }
.sort { padding-top: 4px; }
.sort .l1 { margin-top: 3px; }
.find { padding-top: 3px; }
.find .l1 { margin-top: 2px; }
.idea-btn { flex: 1; display: flex; flex-direction: column; align-items: center; padding-top: 3px; }
.idea-btn .l1 { margin-top: 3px; }

/* formula bar */
.formula {
  flex: none;
  margin-left: -3px;
  height: 39px;
  background: #e8e8e8;
  box-sizing: border-box;
  padding: 10px 0 9px 6px;
  display: flex;
  align-items: stretch;
  font-size: 11px;
}
.namebox {
  flex: none;
  box-sizing: border-box;
  width: 86px;
  background: #fff;
  display: flex;
  align-items: center;
  justify-content: space-between;
  padding: 0 7px 0 3px;
  font-family: "Liberation Sans", sans-serif;
  color: #444;
}
.grip { flex: none; width: 2px; margin: 5px 12px 5px 12px; border-left: 2px dotted #a8a8a8; box-sizing: border-box; }
.fx-btns {
  flex: none;
  box-sizing: border-box;
  width: 93px;
  background: #fff;
  display: flex;
  align-items: center;
  gap: 21px;
  padding-left: 10px;
}
.fx { font-family: "Liberation Serif", serif; font-style: italic; font-size: 13px; color: #666; }
.finput { flex: 1; margin-left: 2px; background: #fff; padding-left: 10px; line-height: 20px; font-family: "Liberation Sans", sans-serif; font-size: 11.500px; color: #444; }

/* sheet */
.sheet {
  position: relative;
  flex: 1;
  min-height: 0;
  overflow: hidden;
  display: grid;
  grid-template-columns: 22px repeat(19, 58px);
  grid-auto-rows: 15.860px;
  grid-template-rows: 15px;
  font-family: "Liberation Sans", sans-serif;
}
.corner { background: #e6e6e6; position: relative; border-right: 1px solid #c8c8c8; box-sizing: border-box; }
.corner i { position: absolute; right: 1px; bottom: 1px; border-style: solid; border-width: 0 0 11px 11px; border-color: transparent transparent #b5b5b5 transparent; }
.colh {
  box-sizing: border-box;
  background: #e6e6e6;
  border-right: 1px solid #c8c8c8;
  border-bottom: 1px solid #bdbdbd;
  text-align: center;
  font-size: 12px;
  line-height: 15px;
  color: #444;
}
.colh.sel { background: #d2d2d2; color: #217346; }
.rowh {
  box-sizing: border-box;
  background: #e6e6e6;
  border-right: 1px solid #bdbdbd;
  border-bottom: 1px solid #cfcfcf;
  text-align: center;
  font-size: 12.500px;
  line-height: 17px;
  color: #444;
}
.rowh.sel { background: #d2d2d2; color: #217346; }
.cell {
  box-sizing: border-box;
  border-right: 1px solid #e2e2e2;
  border-bottom: 1px solid #e2e2e2;
  text-align: right;
  padding-right: 1px;
  font-size: 12.500px;
  line-height: 17px;
  color: #333;
  overflow: hidden;
}
.cell.grey { background: #bfbfbf; border-right-color: #8e8e8e; border-bottom-color: #8e8e8e; }
.cell.white { background: #fff; border-right-color: #8e8e8e; border-bottom-color: #8e8e8e; }
.selection {
  position: absolute;
  left: 22px;
  top: 15px;
  box-sizing: border-box;
  width: 117px;
  height: 81px;
  border: 1.500px solid #217346;
  pointer-events: none;
}
.selection i { position: absolute; right: -3px; bottom: -3px; width: 4px; height: 4px; background: #217346; border: 1px solid #fff; }
.hscroll { flex: none; height: 3px; margin-left: -3px; padding-left: 15px; background: #fff; }
.hscroll i { display: block; width: 1030px; height: 3px; background: #c6c6c6; }
.edge { position: absolute; right: 1px; top: 136px; bottom: 0; width: 1px; background: #d4d4d4; }

/* menus */
.menu {
  position: absolute;
  box-sizing: border-box;
  background: #fff;
  border: 1px solid #c6c6c6;
  box-shadow: 1px 1px 3px rgba(0, 0, 0, 0.22);
  font-size: 10.500px;
  color: #3a3a3a;
  z-index: 2;
}
.main-menu { left: 590px; top: 121px; width: 175px; height: 286px; padding: 1px 0 0 1px; }
.mitem { position: relative; height: 41.500px; display: flex; align-items: center; padding-left: 13px; }
.mitem.active { background: #d2d0ce; height: 40.500px; margin-bottom: 1px; }
.micon { margin-top: 5px; width: 34px; }
.mtext { position: absolute; left: 45px; top: 47%; transform: translateY(-50%); font-weight: 700; white-space: nowrap; }
.arrow { position: absolute; right: 6px; top: 50%; transform: translateY(-50%); }
.part-sep { position: absolute; left: 40px; right: 0; top: 83px; height: 1px; background: #e1dfdd; }
.full-sep { position: absolute; left: 0; right: 0; top: 208px; height: 2px; background: #e8e6e5; }
.msmall { position: relative; height: 24.500px; display: flex; align-items: center; padding-left: 11px; gap: 7px; color: #444; }
.msmall:nth-of-type(6) { margin-top: 1px; }

.sub-menu { left: 764px; top: 121px; width: 133px; height: 317px; padding: 3px 1px 0; }
.sitem { height: 41px; display: flex; align-items: center; padding-left: 13px; box-sizing: border-box; }
.sitem.short { height: 39px; padding-top: 2px; }
.sitem.active { background: #d2d0ce; }
.dup { padding-top: 4px; }
.dup .sicon { margin-top: 3px; }
.stext { margin-left: 5px; font-weight: 700; white-space: nowrap; }
.sother { margin: 7px 0 0 32px; white-space: nowrap; color: #444; line-height: 15px; }

/* annotation boxes */
.mark { position: absolute; z-index: 3; box-sizing: border-box; border: 1px solid #f08a8a; pointer-events: none; }
.m1 { left: 600px; top: 64px; width: 32px; height: 41px; border-color: #ee6f6f; }
.m2 { left: 587px; top: 127px; width: 170px; height: 39px; }
.m3 { left: 768px; top: 358px; width: 166px; height: 54px; }

/* watermark */
.watermark {
  position: absolute;
  left: 825px;
  top: 424px;
  z-index: 4;
  display: flex;
  align-items: center;
  gap: 6px;
}
.watermark span {
  font-family: "Liberation Sans", "Noto Sans CJK SC", sans-serif;
  font-size: 26.500px;
  line-height: 34px;
  color: rgba(255, 255, 255, 0.85);
  -webkit-text-stroke: 0.5px #a8a8a8;
  white-space: nowrap;
}
</style>
